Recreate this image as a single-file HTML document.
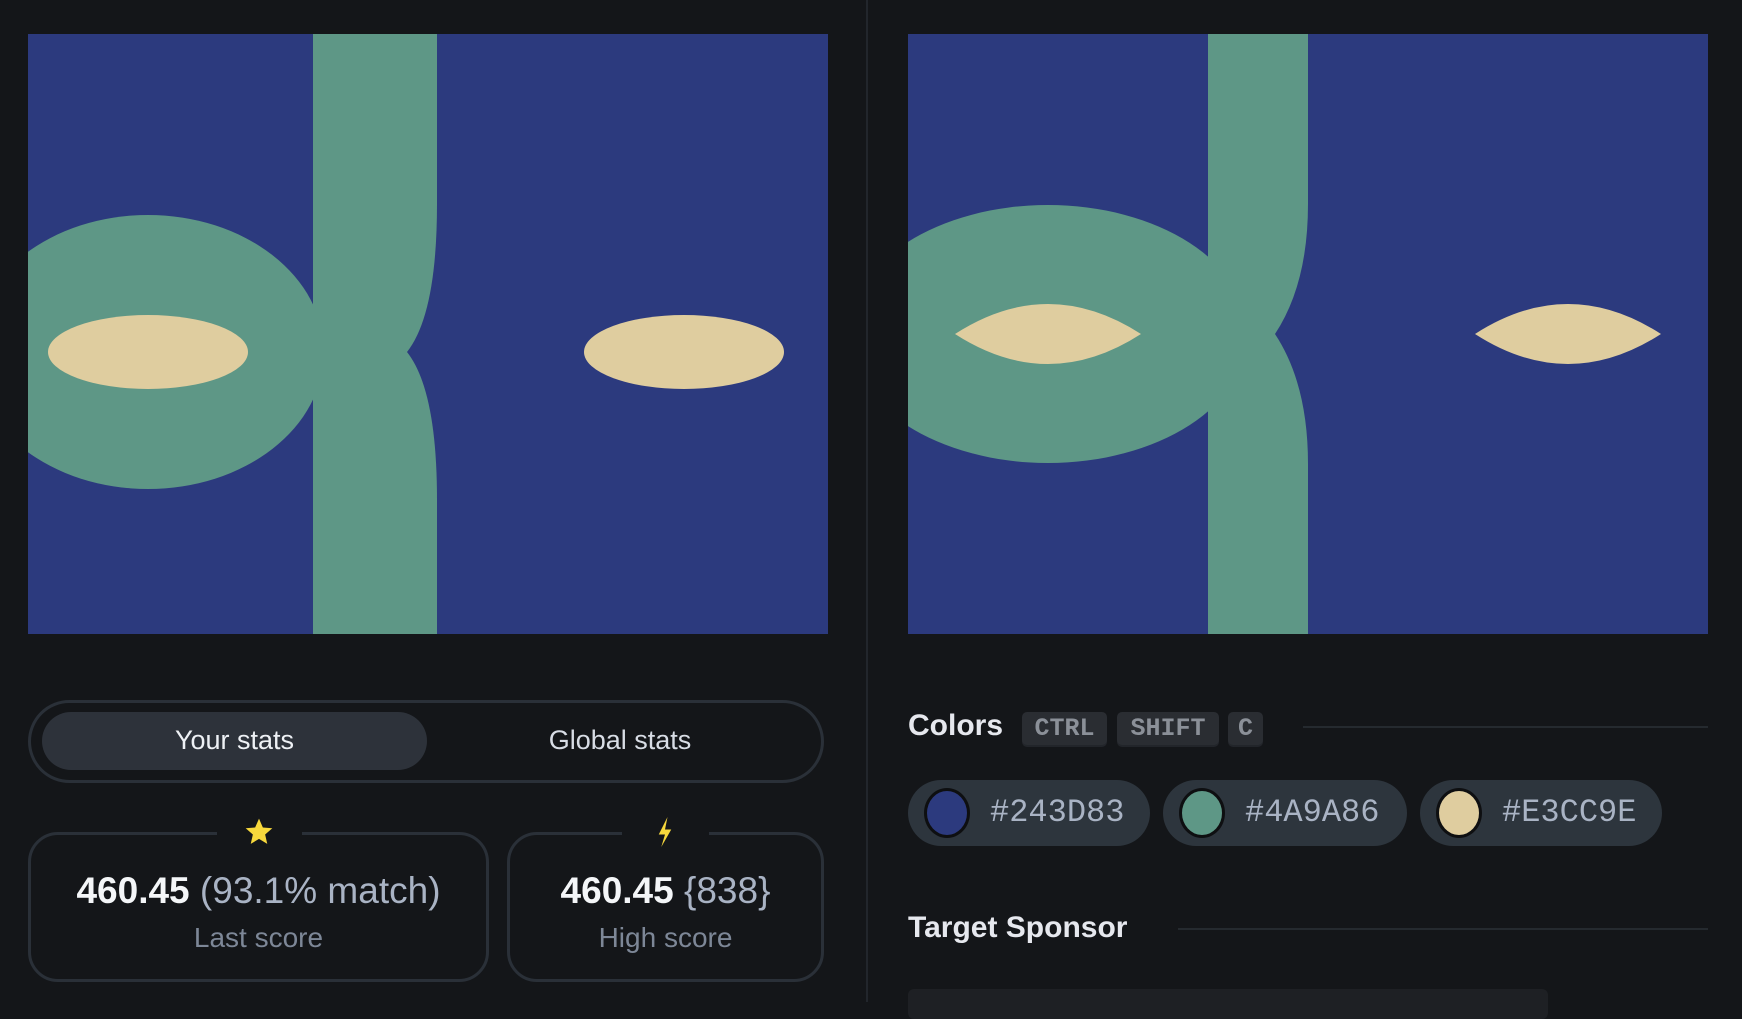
<!DOCTYPE html>
<html><head><meta charset="utf-8"><style>
*{margin:0;padding:0;box-sizing:border-box}
body{width:1742px;height:1002px;background:#141619;position:relative;overflow:hidden;font-family:"Liberation Sans",sans-serif}
.abs{position:absolute}
.div{left:866px;top:0;width:2px;height:1002px;background:#22262c}
.toggle{left:28px;top:700px;width:796px;height:83px;border:3px solid #2a3038;border-radius:42px}
.pill{left:42px;top:712px;width:385px;height:58px;border-radius:29px;background:#2d323a}
.tt{font-size:27px;color:#eef1f5;top:725px}
.card{border:3px solid #2a3038;border-radius:30px;top:832px;height:150px}
.gap{top:828px;height:8px;background:#141619}
.num{font-size:37px;font-weight:bold;color:#f4f6f8;top:870px;white-space:nowrap;text-align:center}
.num span{font-weight:normal;color:#a9b3c4}
.lbl{font-size:28px;color:#7d8797;top:922px;text-align:center}
.h{font-size:30px;font-weight:bold;color:#e6e8ee}
.kbd{top:712px;height:33px;background:#2a2d32;border-radius:5px;font-family:"Liberation Mono",monospace;font-weight:bold;font-size:25px;color:#8b9098;text-align:center;line-height:33px;box-shadow:0 2px 0 #22252a}
.line{height:2px;background:#252a2f}
.chip{top:780px;height:66px;border-radius:33px;background:#2d353d}
.chip i{position:absolute;left:16px;top:8px;width:46px;height:50px;border-radius:50%;border:3px solid #0e0f11}
.chip b{position:absolute;left:82px;top:14px;font-family:"Liberation Mono",monospace;font-weight:normal;font-size:32px;color:#a9b3c4}
</style></head><body>
<svg class="abs" style="left:28px;top:34px" width="800" height="600" viewBox="0 0 800 600">
<rect width="800" height="600" fill="#2c3a7e"/>
<ellipse cx="120" cy="318" rx="176" ry="137" fill="#5e9786"/>
<path d="M285,-5 H409 V170 Q409,280 379,318 L285,318 Z" fill="#5e9786"/>
<path d="M285,605 H409 V466 Q409,356 379,318 L285,318 Z" fill="#5e9786"/>
<ellipse cx="120" cy="318" rx="100" ry="37" fill="#dfcd9f"/>
<ellipse cx="656" cy="318" rx="100" ry="37" fill="#dfcd9f"/>
</svg>
<svg class="abs" style="left:908px;top:34px" width="800" height="600" viewBox="0 0 800 600">
<rect width="800" height="600" fill="#2c3a7e"/>
<ellipse cx="140" cy="300" rx="200" ry="129" fill="#5e9786"/>
<path d="M300,0 H400 V170 Q400,250 367,300 Q400,350 400,430 V600 H300 Z" fill="#5e9786"/>
<path d="M47,300 Q140,240 233,300 Q140,360 47,300 Z" fill="#dfcd9f"/>
<path d="M567,300 Q660,240 753,300 Q660,360 567,300 Z" fill="#dfcd9f"/>
</svg>
<div class="abs div"></div>
<div class="abs toggle"></div>
<div class="abs pill"></div>
<div class="abs tt" style="left:42px;width:385px;text-align:center">Your stats</div>
<div class="abs tt" style="left:430px;width:380px;text-align:center;color:#d8dde5">Global stats</div>
<div class="abs card" style="left:28px;width:461px"></div>
<div class="abs gap" style="left:217px;width:85px"></div>
<div class="abs card" style="left:507px;width:317px"></div>
<div class="abs gap" style="left:622px;width:87px"></div>
<svg class="abs" style="left:243px;top:816px" width="32" height="32" viewBox="0 0 24 24"><path d="M12 2l2.9 6.6 7.1.6-5.4 4.7 1.6 7-6.2-3.7-6.2 3.7 1.6-7L2 9.2l7.1-.6z" fill="#f7d83c"/></svg>
<svg class="abs" style="left:655px;top:815px" width="20" height="34" viewBox="0 0 16 24"><path d="M10 0L3 14h5l-3 10 8-14H8z" fill="#f7d83c"/></svg>
<div class="abs num" style="left:28px;width:461px">460.45 <span>(93.1% match)</span></div>
<div class="abs lbl" style="left:28px;width:461px">Last score</div>
<div class="abs num" style="left:507px;width:317px">460.45 <span>{838}</span></div>
<div class="abs lbl" style="left:507px;width:317px">High score</div>
<div class="abs h" style="left:908px;top:709px">Colors</div>
<div class="abs kbd" style="left:1022px;width:85px">CTRL</div>
<div class="abs kbd" style="left:1117px;width:102px">SHIFT</div>
<div class="abs kbd" style="left:1228px;width:35px">C</div>
<div class="abs line" style="left:1303px;top:726px;width:405px"></div>
<div class="abs chip" style="left:908px;width:242px"><i style="background:#2c3a7e"></i><b>#243D83</b></div>
<div class="abs chip" style="left:1163px;width:244px"><i style="background:#5e9786"></i><b>#4A9A86</b></div>
<div class="abs chip" style="left:1420px;width:242px"><i style="background:#dfcd9f"></i><b>#E3CC9E</b></div>
<div class="abs h" style="left:908px;top:911px">Target Sponsor</div>
<div class="abs line" style="left:1178px;top:928px;width:530px"></div>
<div class="abs" style="left:908px;top:989px;width:640px;height:30px;background:#1e2024;border-radius:6px"></div>
</body></html>
